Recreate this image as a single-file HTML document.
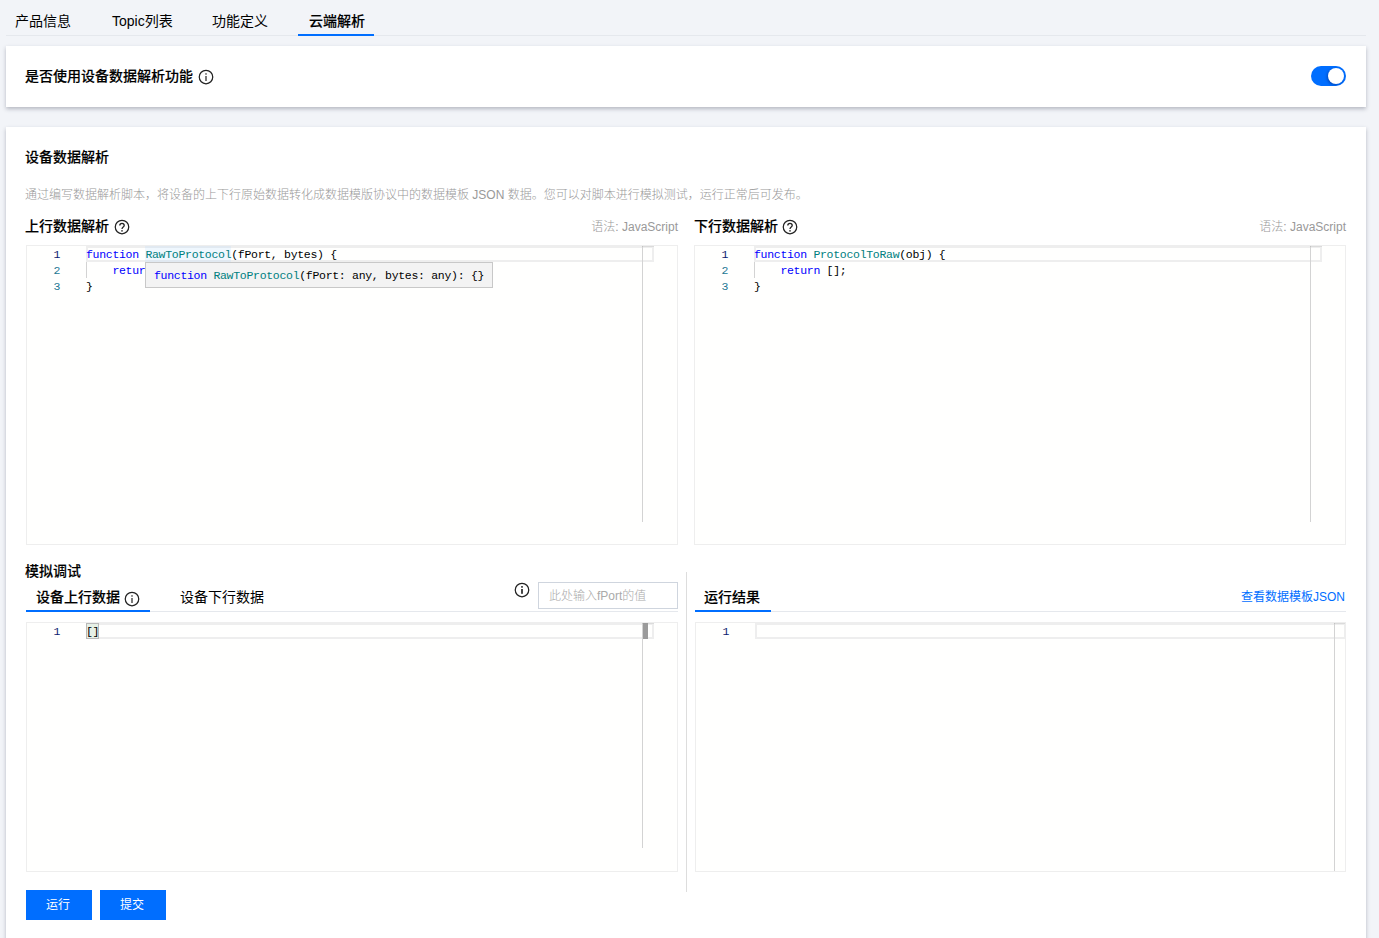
<!DOCTYPE html>
<html lang="zh-CN">
<head>
<meta charset="utf-8">
<title>云端解析</title>
<style>
*{box-sizing:border-box;margin:0;padding:0}
html,body{width:1379px;height:938px;overflow:hidden;background:#f2f4f8}
body{position:relative;font-family:"Liberation Sans","Noto Sans CJK SC",sans-serif;font-size:12px;color:#000}
.abs{position:absolute;white-space:nowrap}
.t14{font-size:14px;line-height:20px;height:20px}
.t12{font-size:12px;line-height:18px;height:18px}
.b{font-weight:500;-webkit-text-stroke:0.15px #000}
.card{position:absolute;background:#fff;box-shadow:0 2px 4px 0 rgba(54,58,80,.32)}
.ico{position:absolute;width:16px;height:16px}
.ed{position:absolute;background:#fffffe;border:1px solid #eee;overflow:visible}
.ed .ln{position:absolute;left:0;margin-top:1px;width:33px;text-align:right;color:#237893;font:11.5px/16px "Liberation Mono","DejaVu Sans Mono",monospace;letter-spacing:-0.3px;height:16px}
.ed .ln.cur{color:#0b216f}
.ed .code{position:absolute;left:59px;margin-top:1px;color:#000;font:11.5px/16px "Liberation Mono","DejaVu Sans Mono",monospace;letter-spacing:-0.3px;height:16px;white-space:pre}
.kw{color:#0000ff}.fn{color:#008080}
.ed .curline{position:absolute;left:59px;height:16px;border:2px solid #eee}
.ed .ruler{position:absolute;width:1px;background:#d3d3d3;top:0}
.ed .guide{position:absolute;width:1px;background:#d3d3d3}
.ed .mshadow{position:absolute;top:0;height:1px;background:rgba(0,0,0,.08)}
.hover{position:absolute;background:#f3f3f3;border:1px solid #c8c8c8;font:11.5px/16px "Liberation Mono","DejaVu Sans Mono",monospace;letter-spacing:-0.3px;white-space:pre;color:#000}
.btn{position:absolute;height:30px;width:66px;background:#006eff;color:#fff;font-size:12px;line-height:30px;text-align:center;padding-right:2px}
</style>
</head>
<body>

<!-- top tabs -->
<div class="abs t14" style="left:15px;top:11px">产品信息</div>
<div class="abs t14" style="left:112px;top:11px">Topic列表</div>
<div class="abs t14" style="left:212px;top:11px">功能定义</div>
<div class="abs t14 b" style="left:309px;top:11px">云端解析</div>
<div class="abs" style="left:6px;top:35px;width:1360px;height:1px;background:#e5e8ed"></div>
<div class="abs" style="left:298px;top:34px;width:76px;height:2px;background:#006eff"></div>

<!-- card 1 -->
<div class="card" style="left:6px;top:46px;width:1360px;height:61px"></div>
<div class="abs t14 b" style="left:25px;top:66px">是否使用设备数据解析功能</div>
<svg class="ico" style="left:198px;top:69px" viewBox="0 0 16 16"><circle cx="8" cy="8" r="6.75" fill="none" stroke="#222" stroke-width="1.25"/><rect x="7.35" y="7" width="1.3" height="5" fill="#333"/><rect x="7.35" y="4.2" width="1.3" height="1.5" fill="#333"/></svg>
<div class="abs" style="left:1311px;top:66px;width:35px;height:20px;border-radius:10px;background:#006eff;overflow:hidden"><div class="abs" style="left:17px;top:2px;width:16px;height:16px;border-radius:8px;background:#fff;box-shadow:-1px 1px 3px rgba(0,0,60,.35)"></div></div>

<!-- card 2 -->
<div class="card" style="left:6px;top:127px;width:1360px;height:830px"></div>
<div class="abs t14 b" style="left:25px;top:147px">设备数据解析</div>
<div class="abs t12" style="left:25px;top:186px;color:#999;font-weight:300">通过编写数据解析脚本，将设备的上下行原始数据转化成数据模版协议中的数据模板 JSON 数据。您可以对脚本进行模拟测试，运行正常后可发布。</div>

<div class="abs t14 b" style="left:25px;top:216px">上行数据解析</div>
<svg class="ico" style="left:114px;top:219px" viewBox="0 0 16 16"><circle cx="8" cy="8" r="6.75" fill="none" stroke="#222" stroke-width="1.25"/><path d="M5.8 6.6A2.2 2.2 0 0 1 10.2 6.6C10.2 8 8 8.1 8 9.9" fill="none" stroke="#222" stroke-width="1.3"/><rect x="7.3" y="11.1" width="1.4" height="1.5" fill="#222"/></svg>
<div class="abs t12" style="right:701px;top:218px;color:#999;font-weight:300">语法: JavaScript</div>

<div class="abs t14 b" style="left:694px;top:216px">下行数据解析</div>
<svg class="ico" style="left:782px;top:219px" viewBox="0 0 16 16"><circle cx="8" cy="8" r="6.75" fill="none" stroke="#222" stroke-width="1.25"/><path d="M5.8 6.6A2.2 2.2 0 0 1 10.2 6.6C10.2 8 8 8.1 8 9.9" fill="none" stroke="#222" stroke-width="1.3"/><rect x="7.3" y="11.1" width="1.4" height="1.5" fill="#222"/></svg>
<div class="abs t12" style="right:33px;top:218px;color:#999;font-weight:300">语法: JavaScript</div>

<!-- editor 1 -->
<div class="ed" style="left:26px;top:245px;width:652px;height:300px">
  <div class="curline" style="top:0;width:568px"></div>
  <div class="abs" style="left:118px;top:0;width:86px;height:16px;background:rgba(173,214,255,.2)"></div>
  <div class="ruler" style="left:615px;height:276px"></div>
  <div class="mshadow" style="left:615px;width:12px"></div>
  <div class="guide" style="left:59px;top:16px;height:16px"></div>
  <div class="ln cur" style="top:0">1</div><div class="code" style="top:0"><span class="kw">function</span> <span class="fn">RawToProtocol</span>(fPort, bytes) {</div>
  <div class="ln" style="top:16px">2</div><div class="code" style="top:16px">    <span class="kw">return</span> {};</div>
  <div class="ln" style="top:32px">3</div><div class="code" style="top:32px">}</div>
  <div class="hover" style="left:118px;top:16px;width:348px;height:26px;padding:5px 8px 0 8px"><span class="kw">function</span> <span class="fn">RawToProtocol</span>(fPort: any, bytes: any): {}</div>
</div>

<!-- editor 2 -->
<div class="ed" style="left:694px;top:245px;width:652px;height:300px">
  <div class="curline" style="top:0;width:568px"></div>
  <div class="ruler" style="left:615px;height:276px"></div>
  <div class="mshadow" style="left:615px;width:12px"></div>
  <div class="guide" style="left:59px;top:16px;height:16px"></div>
  <div class="ln cur" style="top:0">1</div><div class="code" style="top:0"><span class="kw">function</span> <span class="fn">ProtocolToRaw</span>(obj) {</div>
  <div class="ln" style="top:16px">2</div><div class="code" style="top:16px">    <span class="kw">return</span> [];</div>
  <div class="ln" style="top:32px">3</div><div class="code" style="top:32px">}</div>
</div>

<!-- debug section -->
<div class="abs t14 b" style="left:25px;top:561px">模拟调试</div>
<div class="abs" style="left:26px;top:611px;width:652px;height:1px;background:#e5e8ed"></div>
<div class="abs" style="left:26px;top:610px;width:124px;height:2px;background:#006eff"></div>
<div class="abs t14 b" style="left:36px;top:587px">设备上行数据</div>
<svg class="ico" style="left:124px;top:591px" viewBox="0 0 16 16"><circle cx="8" cy="8" r="6.75" fill="none" stroke="#222" stroke-width="1.25"/><rect x="7.35" y="7" width="1.3" height="5" fill="#333"/><rect x="7.35" y="4.2" width="1.3" height="1.5" fill="#333"/></svg>
<div class="abs t14" style="left:180px;top:587px">设备下行数据</div>
<svg class="ico" style="left:514px;top:582px" viewBox="0 0 16 16"><circle cx="8" cy="8" r="6.75" fill="none" stroke="#222" stroke-width="1.25"/><rect x="7.1" y="7" width="1.8" height="4.8" fill="#333"/><rect x="7.1" y="4.1" width="1.8" height="1.6" fill="#333"/></svg>
<div class="abs" style="left:538px;top:582px;width:140px;height:27px;border:1px solid #cfd5de;background:#fff"></div>
<div class="abs t12" style="left:549px;top:587px;color:#aaa;font-weight:300">此处输入fPort的值</div>

<div class="abs" style="left:686px;top:572px;width:1px;height:320px;background:#ddd"></div>

<div class="abs" style="left:695px;top:611px;width:651px;height:1px;background:#e5e8ed"></div>
<div class="abs" style="left:695px;top:610px;width:76px;height:2px;background:#006eff"></div>
<div class="abs t14 b" style="left:704px;top:587px">运行结果</div>
<div class="abs t12" style="right:34px;top:588px;color:#006eff">查看数据模板JSON</div>

<!-- editor 3 -->
<div class="ed" style="left:26px;top:622px;width:652px;height:250px">
  <div class="curline" style="top:0;width:568px"></div>
  <div class="ruler" style="left:615px;height:225px"></div>
  <div class="mshadow" style="left:615px;width:12px"></div>
  <div class="abs" style="left:616px;top:0;width:5px;height:16px;background:#9b9b9b"></div>
  <div class="abs" style="left:59px;top:0;width:13px;height:16px;background:#e6f0e6;border:1px solid #b9b9b9"></div>
  <div class="ln cur" style="top:0">1</div><div class="code" style="top:0">[]</div>
</div>

<!-- editor 4 -->
<div class="ed" style="left:695px;top:622px;width:651px;height:250px;overflow:hidden">
  <div class="curline" style="top:0;width:591px"></div>
  <div class="ruler" style="left:638px;height:248px;top:0"></div>
  <div class="mshadow" style="left:638px;width:11px"></div>
  <div class="ln cur" style="top:0">1</div>
</div>

<div class="btn" style="left:26px;top:890px">运行</div>
<div class="btn" style="left:100px;top:890px">提交</div>

</body>
</html>
